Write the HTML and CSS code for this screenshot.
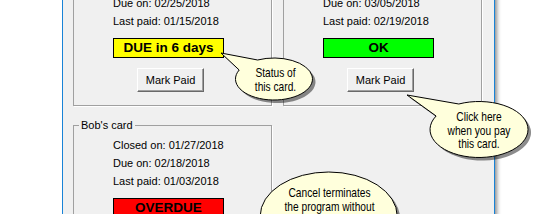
FILE: index.html
```html
<!DOCTYPE html>
<html lang="en">
<head>
  <meta charset="UTF-8" />
  <title>Card Due Dates</title>
  <link rel="stylesheet" href="styles.css">
</head>
<body>
  <div class="window">
    <div class="cards">
      <!-- Card 1 -->
      <fieldset class="card">
        <legend>Alice's card</legend>
        <div class="inner">
          <div class="line">Closed on: 02/04/2018</div>
          <div class="line">Due on: 02/25/2018</div>
          <div class="line">Last paid: 01/15/2018</div>
          <div class="status due">DUE in 6 days</div>
          <button type="button" class="btn">Mark Paid</button>
        </div>
      </fieldset>

      <!-- Card 2 -->
      <fieldset class="card">
        <legend>Carol's card</legend>
        <div class="inner">
          <div class="line">Closed on: 02/11/2018</div>
          <div class="line">Due on: 03/05/2018</div>
          <div class="line">Last paid: 02/19/2018</div>
          <div class="status ok">OK</div>
          <button type="button" class="btn">Mark Paid</button>
        </div>
      </fieldset>

      <!-- Bob -->
      <fieldset class="card">
        <legend>Bob's card</legend>
        <div class="inner">
          <div class="line">Closed on: 01/27/2018</div>
          <div class="line">Due on: 02/18/2018</div>
          <div class="line">Last paid: 01/03/2018</div>
          <div class="status overdue">OVERDUE</div>
          <button type="button" class="btn">Mark Paid</button>
        </div>
      </fieldset>
    </div>
  </div>

  <!-- callouts over the window -->
  <svg class="callouts" width="536" height="214" viewBox="0 0 536 214">
    <g class="shadow" transform="translate(3 3)">
      <path d="M221,53 L257.6,60 A38.5,21 0 1 1 239.2,70 Z"/>
      <path d="M407,95 L458.8,104 A49,28 0 1 1 436.1,116 Z"/>
      <ellipse cx="328.7" cy="216" rx="68.5" ry="44"/>
    </g>
    <g class="bubble">
      <path d="M221,53 L257.6,60 A38.5,21 0 1 1 239.2,70 Z"/>
      <path d="M407,95 L458.8,104 A49,28 0 1 1 436.1,116 Z"/>
      <ellipse cx="328.7" cy="216" rx="68.5" ry="44"/>
    </g>
    <g class="note">
      <text transform="translate(275.5 77) scale(.85 1)">Status of</text>
      <text transform="translate(275.5 91) scale(.85 1)">this card.</text>
      <text transform="translate(479 121) scale(.85 1)">Click here</text>
      <text transform="translate(479 135) scale(.85 1)">when you pay</text>
      <text transform="translate(479 148) scale(.85 1)">this card.</text>
      <text transform="translate(329.5 197) scale(.85 1)">Cancel terminates</text>
      <text transform="translate(329.5 211) scale(.85 1)">the program without</text>
    </g>
  </svg>
</body>
</html>
```

FILE: styles.css
```css
html { overflow: hidden; }
body {
  margin: 0; background: #fff; color: #000;
  font-family: 'Liberation Sans', Arial, sans-serif; font-size: 11px;
}
.window {
  box-sizing: border-box; width: 433px; margin: -42px 0 0 62px;
  padding: 0 12px 20px 10px; background: #f0f0f0;
  border-left: 1px solid #1883d7; border-right: 1px solid #1883d7;
  box-shadow: 4px 0 4px -2px rgba(0,0,0,0.45);
}
.cards {
  display: grid; grid-template-columns: 199px 199px;
  column-gap: 11px; row-gap: 12px;
}
.card {
  margin: 0; min-width: 0; padding: 4px 0 13px 5px;
  border: 1px solid #a0a0a0; box-shadow: 1px 1px 0 #fff;
}
.card legend { padding: 0 2px; line-height: 14px; }
.inner { padding-left: 34px; }
.line { line-height: 18px; }
.status {
  box-sizing: border-box; width: 111px; height: 20px; margin-top: 8px;
  border: 1px solid #000; text-align: center;
  font-size: 13.5px; font-weight: bold; line-height: 18px;
}
.due { background: #ffff00; }
.ok { background: #00ff00; }
.overdue { background: #ff0000; }
.btn {
  display: block; box-sizing: border-box; width: 67px; height: 24px;
  margin: 10px 0 0 24px; padding: 0;
  font-family: inherit; font-size: 11px; color: #000; background: #f0f0f0;
  border: 1px solid; border-color: #fff #696969 #696969 #fff;
  box-shadow: inset -1px -1px 0 #a0a0a0;
}
.callouts { position: absolute; top: 0; left: 0; pointer-events: none; }
.shadow { fill: rgba(0,0,0,0.45); }
.bubble { fill: #ffffdc; stroke: #000; stroke-width: 1; }
.note {
  font-family: 'Liberation Sans', Arial, sans-serif; font-size: 12px;
  fill: #000; text-anchor: middle;
}
```
